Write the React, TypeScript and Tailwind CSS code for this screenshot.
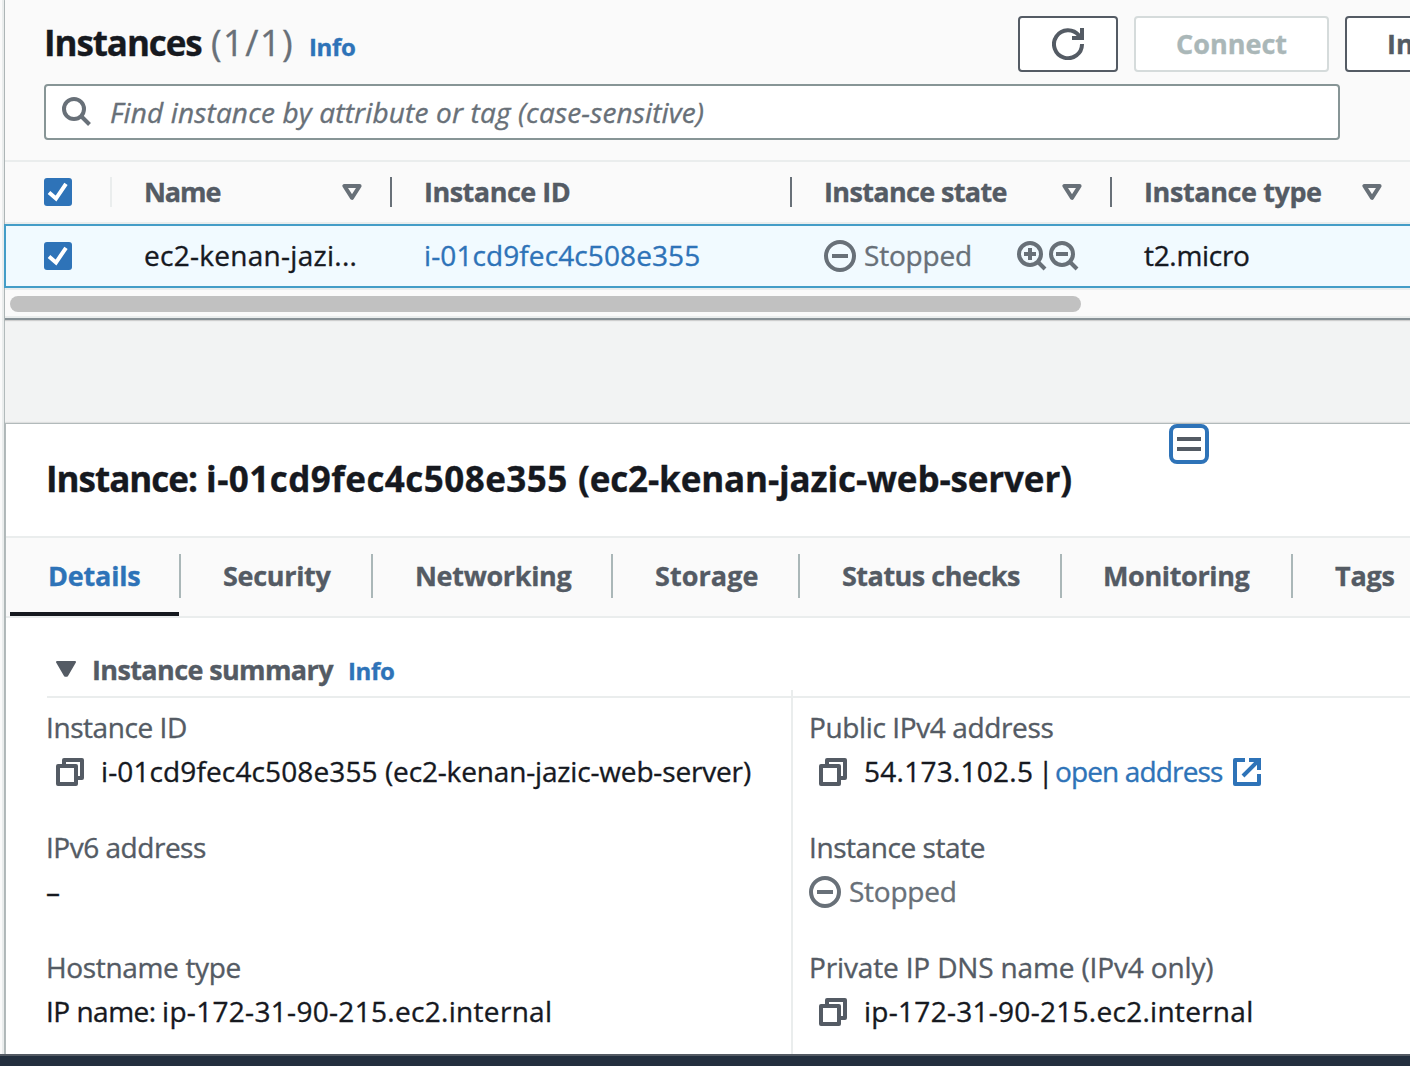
import React, { type ReactNode } from "react";

const Caret = () => (
  <svg width="20" height="16" viewBox="0 0 20 16" fill="none" stroke="#687078" strokeWidth="4" strokeLinejoin="round">
    <path d="M2.4 2H17.6L10 13.8Z" />
  </svg>
);

const Check = () => (
  <span className="flex h-7 w-7 items-center justify-center rounded-[3px] bg-[#2e73b8]">
    <svg width="28" height="28" viewBox="0 0 28 28" fill="none" stroke="#fff" strokeWidth="4">
      <path d="M5 14.5L12 20.5L22 5.8" />
    </svg>
  </span>
);

const Copy = () => (
  <span className="w-[56px] shrink-0 pl-[11px]">
    <svg width="28" height="28" viewBox="0 0 28 28" fill="none" stroke="#545b64" strokeWidth="4" strokeLinejoin="round">
      <path d="M8 6V2H26V20H22" />
      <path d="M2 8H20V26H2Z" />
    </svg>
  </span>
);

const StoppedIcon = () => (
  <svg className="shrink-0" width="32" height="32" viewBox="0 0 32 32" fill="none" stroke="#687078" strokeWidth="4">
    <circle cx="16" cy="16" r="14" />
    <path d="M8 16H24" />
  </svg>
);

const Zoom = ({ plus }: { plus?: boolean }) => (
  <svg width="32" height="32" viewBox="0 0 32 32" fill="none" stroke="#687078" strokeWidth="4">
    <circle cx="14" cy="14" r="11" />
    <path d="M21.5 21.5L29 29" />
    <path d="M8 14H20" />
    {plus && <path d="M14 8V20" />}
  </svg>
);

const Tab = ({ className, children }: { className: string; children: ReactNode }) => (
  <div className={`relative flex h-[78px] shrink-0 items-center whitespace-nowrap text-[27px] font-bold ${className}`}>{children}</div>
);

const TabDivider = () => <span className="mb-0.5 h-11 w-0.5 shrink-0 bg-[#aab7b8]" />;

const Field = ({ label, labelClass, children }: { label: string; labelClass: string; children: ReactNode }) => (
  <div className="h-[120px]">
    <div className={`h-11 pl-px leading-[42px] text-[#545b64] ${labelClass}`}>{label}</div>
    <div className="flex h-11 items-center text-[#16191f]">{children}</div>
  </div>
);

export default function App() {
  return (
    <div className="flex h-[1066px] w-[1410px] flex-col overflow-hidden whitespace-nowrap bg-[#f2f3f3] font-['Open_Sans',sans-serif] text-[28px] text-[#16191f] [-webkit-text-stroke:0.35px]">
      <div className="flex h-[1054px]">
        <div className="w-0.5 shrink-0 bg-[#fafafa]" />
        <div className="w-0.5 shrink-0 bg-[#eaeded]" />
        <div className="w-px shrink-0 bg-[#b2babb]" />
        <main className="flex w-[1405px] shrink-0 flex-col">
          <section className="h-[320px] border-b-2 border-[#879196] bg-[#fafafa] shadow-[0_1px_1px_#00000026]">
            <div className="flex h-[84px] pl-[39px]">
              <h1 className="flex h-[84px] items-baseline leading-[86px]">
                <span className="w-[167px] text-[35px] font-bold tracking-[-1.08px]">Instances</span>
                <span className="w-[98px] text-[36px] tracking-[1.5px] text-[#687078]">(1/1)</span>
                <span className="text-[24px] font-bold tracking-[-0.34px] text-[#2e73b8]">Info</span>
              </h1>
              <div className="ml-auto flex w-[392px] shrink-0 gap-4 overflow-hidden pt-4 font-bold">
                <button className="flex h-14 w-[100px] shrink-0 items-center justify-center rounded-[4px] border-2 border-[#545b64] bg-white">
                  <svg width="32" height="32" viewBox="0 0 32 32" fill="none" stroke="#545b64" strokeWidth="4">
                    <path d="M30 16A14 14 0 1 1 27 7.5L29 10" />
                    <path d="M30 0V10H20" />
                  </svg>
                </button>
                <button className="flex h-14 w-[195px] shrink-0 items-center justify-center rounded-[4px] border-2 border-[#d5dbdb] bg-white text-[27px] text-[#aab7b8]">
                  Connect
                </button>
                <button className="h-14 w-[240px] shrink-0 rounded-[4px] border-2 border-[#545b64] bg-white pl-10 text-left text-[27px] text-[#545b64]">
                  Instance state
                </button>
              </div>
            </div>
            <div className="ml-[39px] flex h-14 w-[1296px] items-center rounded-[4px] border-2 border-[#879596] bg-white pl-4">
              <svg width="30" height="30" viewBox="0 0 30 30" fill="none" stroke="#687078" strokeWidth="4">
                <circle cx="12" cy="12" r="10" />
                <path d="M19 19L27.5 27.5" />
              </svg>
              <span className="ml-[18px] italic tracking-[0.15px] text-[#687078]">Find instance by attribute or tag (case-sensitive)</span>
            </div>
            <div className="mt-5 flex h-16 items-center border-y-2 border-[#eaeded] pl-[39px] text-[27px] font-bold text-[#545b64]">
              <Check />
              <span className="ml-[38px] h-[30px] w-0.5 bg-[#eaeded]" />
              <span className="ml-8 w-[198px] tracking-[-1.1px]">Name</span>
              <Caret />
              <span className="ml-[28px] h-[30px] w-0.5 bg-[#687078]" />
              <span className="ml-8 w-[366px] tracking-[-0.5px]">Instance ID</span>
              <span className="h-[30px] w-0.5 bg-[#687078]" />
              <span className="ml-8 w-[238px] tracking-[-0.64px]">Instance state</span>
              <Caret />
              <span className="ml-[28px] h-[30px] w-0.5 bg-[#687078]" />
              <span className="ml-8 w-[218px] tracking-[-0.4px]">Instance type</span>
              <Caret />
            </div>
            <div className="relative -ml-px flex h-16 items-center border-2 border-r-0 border-[#449dc7] bg-[#f1faff] pl-[38px]">
              <Check />
              <span className="ml-[72px] w-[280px] pb-0.5 tracking-[0.28px]">ec2-kenan-jazi...</span>
              <span className="w-[400px] pb-0.5 tracking-[0.1px] text-[#2e73b8]">i-01cd9fec4c508e355</span>
              <StoppedIcon />
              <span className="ml-2 w-[152px] pb-0.5 tracking-[-0.19px] text-[#687078]">Stopped</span>
              <Zoom plus />
              <Zoom />
              <span className="ml-16 pb-0.5 tracking-[-0.31px]">t2.micro</span>
            </div>
            <div className="h-[30px] border-y-2 border-[#eaeded] pt-[6px]">
              <div className="ml-[5px] h-4 w-[1071px] rounded-full bg-[#c1c1c1]" />
            </div>
          </section>
          <div className="h-[103px]" />
          <section className="relative h-[631px] border-l border-t border-[#b2babb] bg-white shadow-[0_-1px_1px_#00000014]">
            <button className="absolute left-[1163px] top-0 flex h-10 w-10 flex-col items-center justify-center gap-[6px] rounded-[8px] border-4 border-[#2e73b8] bg-white">
              <span className="h-1 w-6 bg-[#545b64]" />
              <span className="h-1 w-6 bg-[#545b64]" />
            </button>
            <h2 className="flex h-[112px] pl-10 text-[35px] font-bold leading-[110px]">
              <span className="w-[160px] tracking-[-1px]">Instance: </span>
              <span className="w-[372px] tracking-[0.45px]">i-01cd9fec4c508e355 </span>
              <span className="tracking-[-0.14px]">(ec2-kenan-jazic-web-server)</span>
            </h2>
            <nav className="flex h-[82px] items-center overflow-hidden border-y-2 border-[#eaeded] bg-[#fafafa] text-[#545b64]">
              <Tab className="ml-1 w-[169px] pb-0.5 pl-[38px] tracking-[-0.18px] text-[#2e73b8]">
                Details
                <span className="absolute inset-x-0 bottom-0 h-1 bg-[#16191f]" />
              </Tab>
              <TabDivider />
              <Tab className="w-[190px] pb-0.5 pl-[42px] tracking-[-0.31px]">Security</Tab>
              <TabDivider />
              <Tab className="w-[238px] pb-0.5 pl-[42px] tracking-[-0.33px]">Networking</Tab>
              <TabDivider />
              <Tab className="w-[185px] pb-0.5 pl-[42px] tracking-[0.06px]">Storage</Tab>
              <TabDivider />
              <Tab className="w-[260px] pb-0.5 pl-[42px] tracking-[-0.5px]">Status checks</Tab>
              <TabDivider />
              <Tab className="w-[229px] pb-0.5 pl-[41px] tracking-[-0.36px]">Monitoring</Tab>
              <TabDivider />
              <Tab className="pb-0.5 pl-[42px] tracking-[-0.26px]">Tags</Tab>
            </nav>
            <div className="ml-[41px] flex h-[80px] items-baseline border-b-2 border-[#eaeded] leading-[103px]">
              <svg className="ml-[9px] mr-4" width="20" height="19" viewBox="0 0 20 19" fill="#545b64" stroke="#545b64" strokeWidth="2" strokeLinejoin="round">
                <path d="M1 1H19L11 14.8H9Z" />
              </svg>
              <span className="w-[256px] text-[27px] font-bold tracking-[-0.62px] text-[#545b64]">Instance summary</span>
              <span className="text-[24px] font-bold tracking-[-0.34px] text-[#2e73b8]">Info</span>
            </div>
            <div className="flex h-[356px] pl-[39px]">
              <div className="w-[746px] shrink-0 pt-2">
                <Field label="Instance ID" labelClass="tracking-[-0.43px]">
                  <Copy />
                  <span className="w-[284px] shrink-0 pb-0.5 tracking-[0.12px]">i-01cd9fec4c508e355 </span>
                  <span className="pb-0.5 tracking-[-0.16px]">(ec2-kenan-jazic-web-server)</span>
                </Field>
                <Field label="IPv6 address" labelClass="tracking-[-0.48px]">
                  <span className="pb-0.5 pl-px">–</span>
                </Field>
                <Field label="Hostname type" labelClass="tracking-[-0.34px]">
                  <span className="w-[117px] pb-0.5 pl-px tracking-[-0.5px]">IP name: </span>
                  <span className="pb-0.5 tracking-[0.31px]">ip-172-31-90-215.ec2.internal</span>
                </Field>
              </div>
              <div className="-mt-2 w-0.5 shrink-0 bg-[#eaeded]" />
              <div className="pl-[15px] pt-2">
                <Field label="Public IPv4 address" labelClass="tracking-[-0.38px]">
                  <Copy />
                  <span className="w-[174px] pb-0.5 tracking-[0.25px]">54.173.102.5</span>
                  <span className="w-[17px] pb-0.5">|</span>
                  <span className="w-[178px] pb-0.5 tracking-[-0.86px] text-[#2e73b8]">open address</span>
                  <svg width="28" height="28" viewBox="0 0 28 28" fill="none" stroke="#2e73b8" strokeWidth="4" strokeLinejoin="round">
                    <path d="M12 2H2V26H26V16" />
                    <path d="M16 2H26V12" strokeLinejoin="miter" />
                    <path d="M26 2L10 18" />
                  </svg>
                </Field>
                <Field label="Instance state" labelClass="tracking-[-0.43px]">
                  <span className="pl-px">
                    <StoppedIcon />
                  </span>
                  <span className="ml-2 pb-0.5 tracking-[-0.25px] text-[#687078]">Stopped</span>
                </Field>
                <Field label="Private IP DNS name (IPv4 only)" labelClass="tracking-[-0.15px]">
                  <Copy />
                  <span className="pb-0.5 tracking-[0.28px]">ip-172-31-90-215.ec2.internal</span>
                </Field>
              </div>
            </div>
          </section>
        </main>
      </div>
      <footer className="h-3 border-t-2 border-[#545b64] bg-[#232f3e]" />
    </div>
  );
}
